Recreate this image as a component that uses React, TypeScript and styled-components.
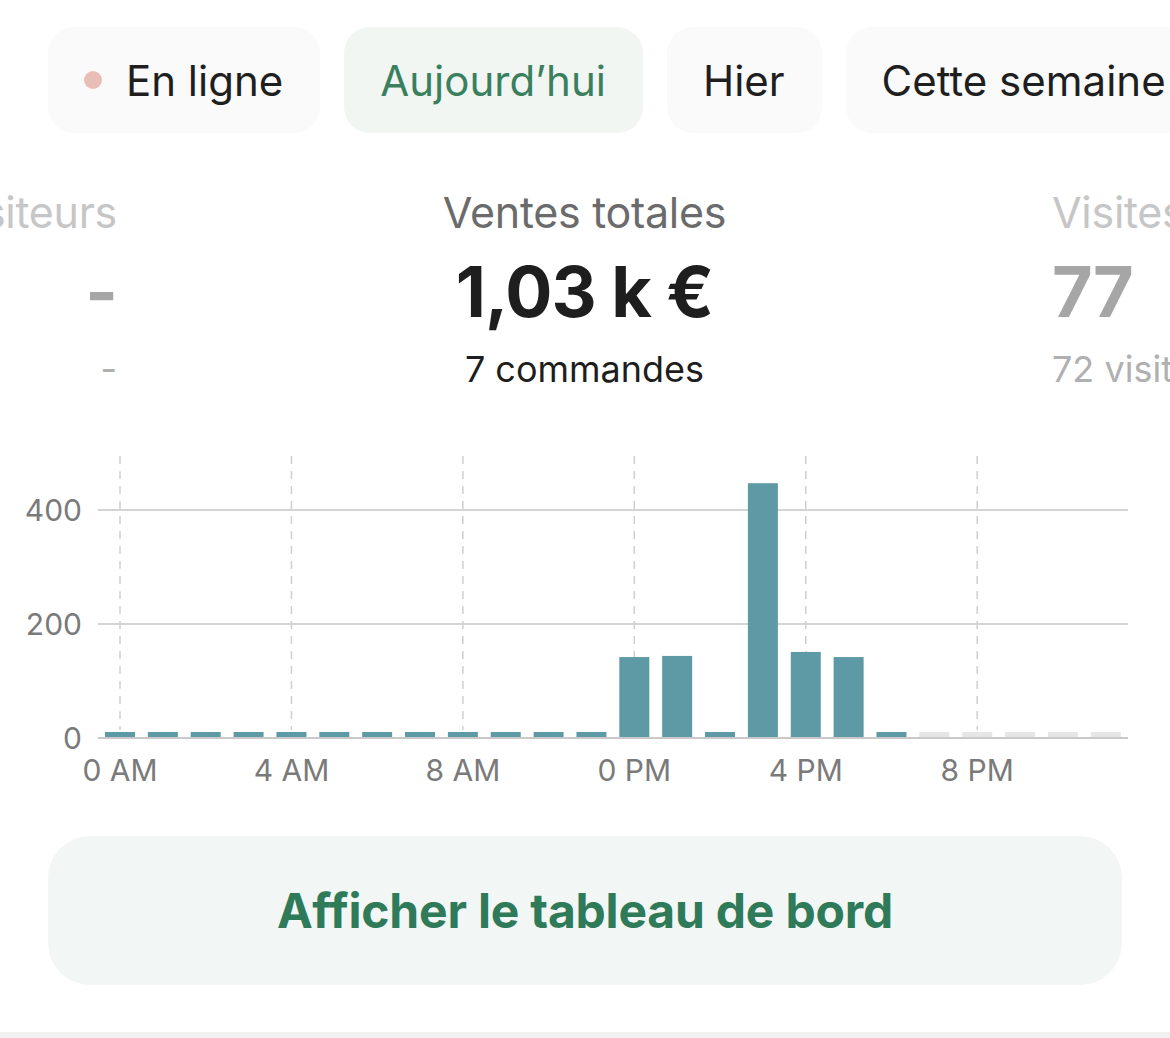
import React from "react";
import styled, { createGlobalStyle } from "styled-components";

const GlobalStyle = createGlobalStyle`
  html, body {
    margin: 0;
    padding: 0;
    background: #ffffff;
    overflow: hidden;
  }
  body {
    font-family: Inter, "Noto Sans", Roboto, sans-serif;
    -webkit-font-smoothing: antialiased;
  }
`;

const Page = styled.div`
  width: 1170px;
  height: 1038px;
  display: flex;
  flex-direction: column;
  overflow: hidden;
`;

const ChipRow = styled.div`
  display: flex;
  gap: 24px;
  padding: 27px 0 0 48px;
  overflow: hidden;
`;

const Chip = styled.div<{ $active?: boolean }>`
  flex-shrink: 0;
  display: flex;
  align-items: center;
  gap: 24px;
  height: 106px;
  padding: 0 37px 0 36px;
  border-radius: 26px;
  background: ${(p) => (p.$active ? "#f1f6f3" : "#fafafa")};
  color: ${(p) => (p.$active ? "#3a7f5e" : "#1f1f1f")};
  font-size: 42px;
  white-space: nowrap;
`;

const Dot = styled.span`
  width: 18px;
  height: 18px;
  border-radius: 50%;
  background: #e8beb7;
`;

const Stats = styled.div`
  display: grid;
  grid-template-columns: 117px 1fr 118px;
  margin-top: 51px;
  overflow: hidden;
`;

const Stat = styled.div<{ $align: "flex-start" | "center" | "flex-end" }>`
  display: flex;
  flex-direction: column;
  align-items: ${(p) => p.$align};
  white-space: nowrap;
  min-width: 0;
`;

const StatTitle = styled.div<{ $muted?: boolean }>`
  font-size: 43px;
  line-height: 56px;
  letter-spacing: -0.3px;
  color: ${(p) => (p.$muted ? "#c6c6c6" : "#6b6b6b")};
`;

const StatValue = styled.div<{ $muted?: boolean }>`
  font-size: 70px;
  line-height: 92px;
  font-weight: 700;
  letter-spacing: -1px;
  margin-top: 6px;
  color: ${(p) => (p.$muted ? "#a6a6a6" : "#1e1e1e")};
`;

const StatSub = styled.div<{ $muted?: boolean }>`
  font-size: 36px;
  line-height: 48px;
  margin-top: 7px;
  color: ${(p) => (p.$muted ? "#b0b0b0" : "#1e1e1e")};
`;

const ChartBox = styled.div`
  margin-top: 51px;
  height: 350px;
`;

const Button = styled.button`
  margin: 42px 48px 0 48px;
  height: 149px;
  border: none;
  border-radius: 42px;
  background: #f2f6f4;
  color: #2f7a59;
  font-family: Inter, "Noto Sans", sans-serif;
  font-size: 48px;
  font-weight: 700;
  letter-spacing: -0.2px;
  cursor: pointer;
`;

const Divider = styled.div`
  margin-top: auto;
  height: 6px;
  background: #f1f1f1;
`;

const values = [
  0, 0, 0, 0, 0, 0, 0, 0, 0, 0, 0, 0, 142, 144, 0, 447, 151, 142, 0,
];
const TOTAL_HOURS = 24;

const Chart = () => {
  const x0 = 120;
  const step = 42.86;
  const base = 294;
  const scale = 0.57;
  const bars = Array.from({ length: TOTAL_HOURS }, (_, i) => {
    const future = i >= values.length;
    const v = future ? 0 : values[i];
    const h = Math.max(6, v * scale);
    return (
      <rect
        key={i}
        x={x0 + i * step - 15}
        y={base - h}
        width={30}
        height={h}
        fill={future ? "#e6e6e6" : "#5e9aa5"}
      />
    );
  });
  const ticks = [
    { h: 0, l: "0 AM" },
    { h: 4, l: "4 AM" },
    { h: 8, l: "8 AM" },
    { h: 12, l: "0 PM" },
    { h: 16, l: "4 PM" },
    { h: 20, l: "8 PM" },
  ];
  const grid = [
    { y: 66, l: "400" },
    { y: 180, l: "200" },
  ];
  return (
    <svg width="1170" height="350" viewBox="0 0 1170 350">
      {ticks.map((t) => (
        <line
          key={t.l}
          x1={x0 + t.h * step}
          x2={x0 + t.h * step}
          y1={12}
          y2={286}
          stroke="#cfcfcf"
          strokeWidth={1.5}
          strokeDasharray="8 7"
        />
      ))}
      {grid.map((g) => (
        <line key={g.l} x1={98} x2={1128} y1={g.y} y2={g.y} stroke="#d4d4d4" strokeWidth={2} />
      ))}
      {bars}
      <line x1={98} x2={1128} y1={base} y2={base} stroke="#c9c9c9" strokeWidth={2} />
      {[...grid, { y: base, l: "0" }].map((g) => (
        <text
          key={g.l}
          x={82}
          y={g.y + 11}
          textAnchor="end"
          fontSize={30}
          fill="#7a7a7a"
          fontFamily="Inter, sans-serif"
        >
          {g.l}
        </text>
      ))}
      {ticks.map((t) => (
        <text
          key={t.l}
          x={x0 + t.h * step}
          y={337}
          textAnchor="middle"
          fontSize={30}
          fill="#7a7a7a"
          fontFamily="Inter, sans-serif"
        >
          {t.l}
        </text>
      ))}
    </svg>
  );
};

export default function App() {
  return (
    <Page>
      <GlobalStyle />
      <ChipRow>
        <Chip>
          <Dot />
          En ligne
        </Chip>
        <Chip $active>Aujourd’hui</Chip>
        <Chip>Hier</Chip>
        <Chip>Cette semaine</Chip>
      </ChipRow>
      <Stats>
        <Stat $align="flex-end">
          <StatTitle $muted>Visiteurs</StatTitle>
          <StatValue $muted>-</StatValue>
          <StatSub $muted>-</StatSub>
        </Stat>
        <Stat $align="center">
          <StatTitle>Ventes totales</StatTitle>
          <StatValue>1,03 k €</StatValue>
          <StatSub>7 commandes</StatSub>
        </Stat>
        <Stat $align="flex-start">
          <StatTitle $muted>Visites</StatTitle>
          <StatValue $muted>77</StatValue>
          <StatSub $muted>72 visiteurs</StatSub>
        </Stat>
      </Stats>
      <ChartBox>
        <Chart />
      </ChartBox>
      <Button>Afficher le tableau de bord</Button>
      <Divider />
    </Page>
  );
}
